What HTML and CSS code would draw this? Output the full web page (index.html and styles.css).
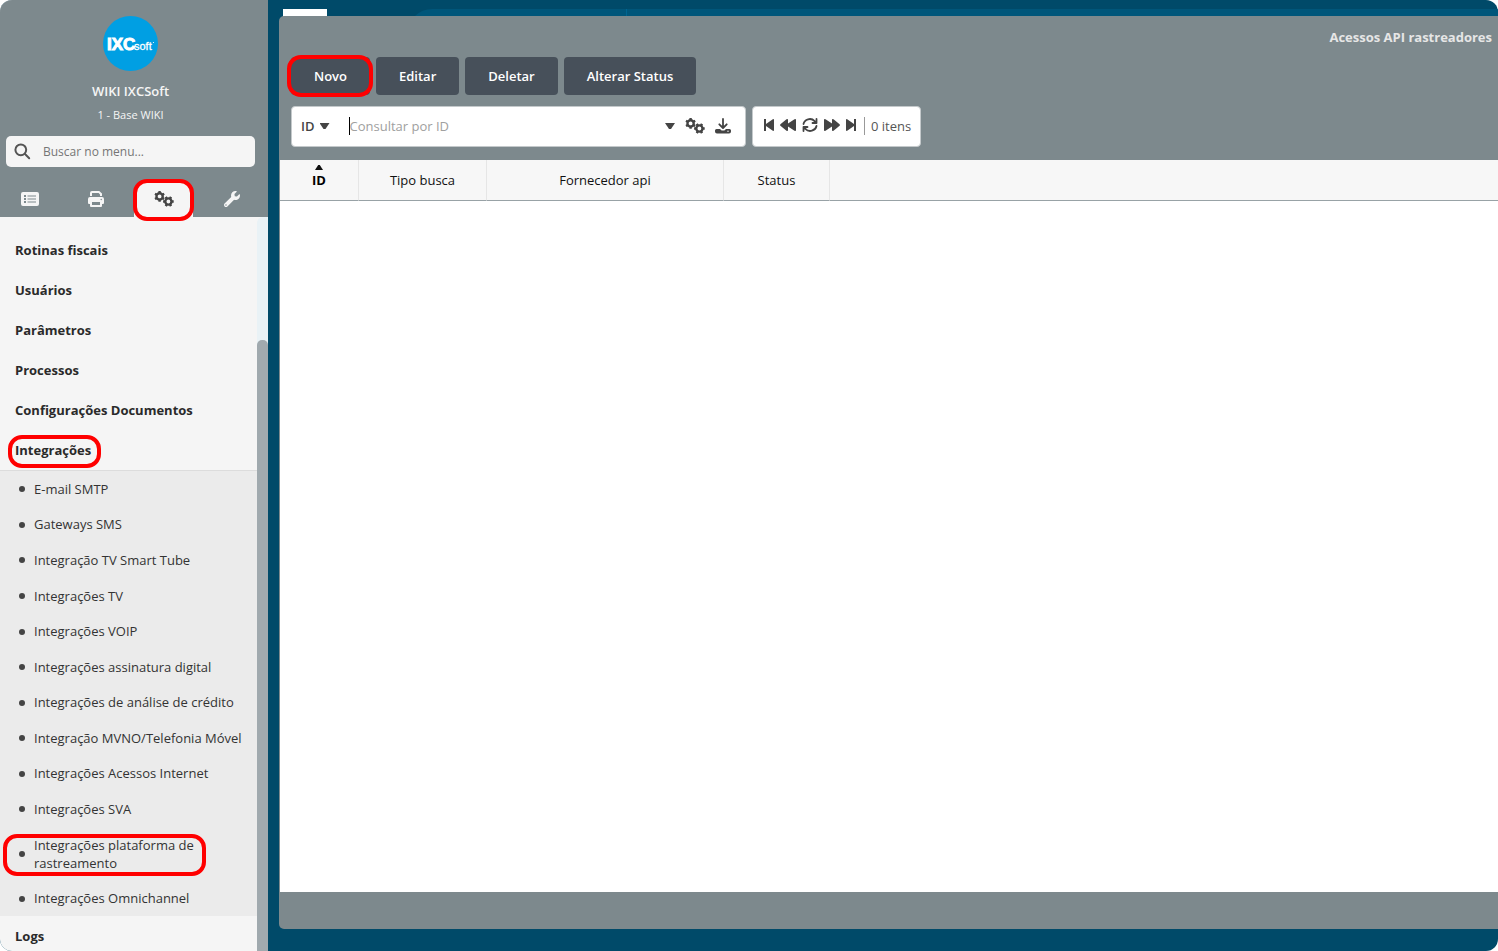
FILE: index.html
```html
<!DOCTYPE html>
<html lang="pt-BR">
<head>
<meta charset="utf-8">
<title>Acessos API rastreadores</title>
<link rel="stylesheet" href="styles.css">
</head>
<body>
<svg class="defs" aria-hidden="true">
  <symbol id="gears" viewBox="0 0 20 16">
    <g fill="none" stroke="currentColor">
      <circle cx="5.6" cy="5.4" r="3.1" stroke-width="2.4"/>
      <path stroke-width="2.4" d="M5.6 2V.1M5.6 8.8v1.9M2.7 3.7 1 2.8M8.5 3.7l1.7-.9M2.7 7.1 1 8M8.5 7.1l1.7.9"/>
      <circle cx="14.4" cy="10.5" r="3.1" stroke-width="2.4"/>
      <path stroke-width="2.4" d="M11 10.5H9.1M17.8 10.5h1.9M12.7 7.6l-.9-1.7M12.7 13.4l-.9 1.7M16.1 7.6l.9-1.7M16.1 13.4l.9 1.7"/>
    </g>
  </symbol>
</svg>
<div class="app">
  <aside class="sidebar">
    <header class="profile">
      <svg class="logo" viewBox="0 0 55 55" role="img" aria-label="IXCsoft">
        <circle cx="27.5" cy="27.5" r="27.5" fill="#009fe3"/>
        <text class="logo-big" x="4" y="34">IXC</text>
        <text class="logo-small" x="31" y="34">soft</text>
        <circle cx="50.5" cy="26.500" r=".6" fill="#fff"/>
      </svg>
      <strong class="company">WIKI IXCSoft</strong>
      <span class="base">1 - Base WIKI</span>
      <label class="search">
        <svg width="17" height="17" viewBox="0 0 17 17" fill="none" stroke="#555" stroke-width="2" stroke-linecap="round"><circle cx="6.8" cy="6.8" r="5.4"/><path d="m11 11 4.200 4.200"/></svg>
        <input type="text" placeholder="Buscar no menu..." aria-label="Buscar no menu">
      </label>
      <nav class="tabs">
        <button type="button" aria-label="Cadastros"><svg width="18" height="14" viewBox="0 0 18 14"><path fill="currentColor" fill-rule="evenodd" d="M2 0h14a2 2 0 0 1 2 2v10a2 2 0 0 1-2 2H2a2 2 0 0 1-2-2V2a2 2 0 0 1 2-2zM3 3v2h2V3zM3 6v2h2V6zM3 9v2h2V9zM6.500 3.400v1.200H15V3.400zM6.500 6.400v1.200H15V6.400zM6.500 9.400v1.200H15V9.400z"/></svg></button>
        <button type="button" aria-label="Relatórios"><svg width="16" height="16" viewBox="0 0 16 16"><path fill="currentColor" fill-rule="evenodd" d="M2 5V2a2 2 0 0 1 2-2h7.200L14 2.600V5h-2V3.400L10.600 2H4v3zM2 6h12a2 2 0 0 1 2 2v4a1 1 0 0 1-1 1h-1v2a1 1 0 0 1-1 1H3a1 1 0 0 1-1-1v-2H1a1 1 0 0 1-1-1V8a2 2 0 0 1 2-2zM4 11v3h8v-3zM13.200 7.800a.7.7 0 1 0 0 1.400.7.7 0 0 0 0-1.400z"/></svg></button>
        <button type="button" class="active marked" aria-label="Configurações"><svg width="20" height="16"><use href="#gears"/></svg></button>
        <button type="button" aria-label="Ferramentas"><svg width="16" height="16" viewBox="0 0 512 512"><path fill="currentColor" d="M507.700 109.100c-2.200-9-13.500-12.100-20.100-5.500l-74.400 74.400-67.900-11.300L334 98.900l74.400-74.400c6.600-6.600 3.400-17.900-5.700-20.200-47.400-11.700-99.600.9-136.600 37.900-39.600 39.600-50.500 97.100-34.100 147.200L18.700 402.800c-25 25-25 65.500 0 90.500s65.500 25 90.500 0l213.200-213.200c50.100 16.700 107.500 5.700 147.400-34.200 37.100-37.100 49.700-89.300 37.900-136.800zM64 472c-13.200 0-24-10.800-24-24s10.700-24 24-24 24 10.700 24 24-10.700 24-24 24z"/></svg></button>
      </nav>
    </header>
    <div class="menu-area">
      <ul class="menu">
        <li><a href="#">Rotinas fiscais</a></li>
        <li><a href="#">Usuários</a></li>
        <li><a href="#">Parâmetros</a></li>
        <li><a href="#">Processos</a></li>
        <li><a href="#">Configurações Documentos</a></li>
        <li><a href="#" class="marked">Integrações</a>
          <ul class="submenu">
            <li><a href="#">E-mail SMTP</a></li>
            <li><a href="#">Gateways SMS</a></li>
            <li><a href="#">Integração TV Smart Tube</a></li>
            <li><a href="#">Integrações TV</a></li>
            <li><a href="#">Integrações VOIP</a></li>
            <li><a href="#">Integrações assinatura digital</a></li>
            <li><a href="#">Integrações de análise de crédito</a></li>
            <li><a href="#">Integração MVNO/Telefonia Móvel</a></li>
            <li><a href="#">Integrações Acessos Internet</a></li>
            <li><a href="#">Integrações SVA</a></li>
            <li class="marked"><a href="#">Integrações plataforma de rastreamento</a></li>
            <li><a href="#">Integrações Omnichannel</a></li>
          </ul>
        </li>
        <li><a href="#">Logs</a></li>
      </ul>
      <div class="scroll-track"><div class="scroll-thumb"></div></div>
    </div>
  </aside>

  <main class="desktop">
    <div class="desktop-tile"></div>
    <div class="desktop-bar"></div>
    <section class="window">
      <h1>Acessos API rastreadores</h1>
      <div class="actions">
        <button type="button" class="marked">Novo</button>
        <button type="button">Editar</button>
        <button type="button">Deletar</button>
        <button type="button">Alterar Status</button>
      </div>
      <div class="filters">
        <div class="panel query">
          <button type="button" class="field">ID <i class="caret"></i></button>
          <input type="text" placeholder="Consultar por ID" aria-label="Consultar por ID">
          <button type="button" aria-label="Opções"><i class="caret"></i></button>
          <button type="button" aria-label="Configurar"><svg width="20" height="16"><use href="#gears"/></svg></button>
          <button type="button" aria-label="Exportar"><svg width="16" height="16" viewBox="0 0 16 16" fill="none" stroke="currentColor"><path stroke-width="1.800" stroke-linecap="round" stroke-linejoin="round" d="M8 1v8.500M4.300 6.300 8 10l3.700-3.700"/><path fill="currentColor" stroke="none" d="M1.500 11H5l1.600 1.600h2.800L11 11h3.500A1.500 1.500 0 0 1 16 12.500v1a2 2 0 0 1-2 2H2a2 2 0 0 1-2-2v-1A1.500 1.500 0 0 1 1.500 11z"/><circle cx="13" cy="13.300" r=".7" fill="#fff" stroke="none"/></svg></button>
        </div>
        <div class="panel pager">
          <button type="button" aria-label="Primeira"><svg width="10" height="12" viewBox="0 0 10 12" fill="currentColor"><path d="M0 0h2v5L8.800.2Q10-.3 10 1v10q0 1.300-1.200.8L2 7v5H0z"/></svg></button>
          <button type="button" aria-label="Anterior"><svg width="16" height="12" viewBox="0 0 16 12" fill="currentColor"><path d="M.4 5.200 6.500.3Q8-.4 8 1v3.500L14.500.3Q16-.4 16 1v10q0 1.400-1.500.7L8 7.500V11q0 1.400-1.500.7L.4 6.800Q-.2 6 .4 5.200z"/></svg></button>
          <button type="button" aria-label="Atualizar"><svg width="16" height="14" viewBox="0 0 16 14" fill="none" stroke="currentColor" stroke-width="1.800" stroke-linecap="round" stroke-linejoin="round"><path d="M1.500 6C2.500 1.200 9-.8 12.600 3.200L14 4.800M14.500 1v4h-4M14.500 8c-1 4.800-7.500 6.800-11.100 2.800L2 9.200M1.500 13V9h4"/></svg></button>
          <button type="button" aria-label="Próxima"><svg width="16" height="12" viewBox="0 0 16 12" fill="currentColor"><path d="M15.600 5.200 9.500.3Q8-.4 8 1v3.500L1.500.3Q0-.4 0 1v10q0 1.400 1.500.7L8 7.500V11q0 1.400 1.500.7l6.100-4.900q.6-.8 0-1.600z"/></svg></button>
          <button type="button" aria-label="Última"><svg width="10" height="12" viewBox="0 0 10 12" fill="currentColor"><path d="M10 0H8v5L1.200.2Q0-.3 0 1v10q0 1.300 1.200.8L8 7v5h2z"/></svg></button>
          <span class="count">0 itens</span>
        </div>
      </div>
      <div class="grid">
        <table>
          <colgroup><col class="c-id"><col class="c-type"><col class="c-vendor"><col class="c-status"><col></colgroup>
          <thead><tr><th class="sorted">ID</th><th>Tipo busca</th><th>Fornecedor api</th><th>Status</th><th></th></tr></thead>
        </table>
      </div>
    </section>
  </main>
</div>
</body>
</html>
```
FILE: styles.css
```css
* { box-sizing: border-box; }

body {
  margin: 0;
  background: #fff;
  font: 13px/18px "Open Sans", "Noto Sans", sans-serif;
}

button, input {
  margin: 0;
  padding: 0;
  border: 0;
  background: none;
  font: inherit;
  color: inherit;
}

button { cursor: pointer; }
a { color: inherit; text-decoration: none; }
ul { margin: 0; padding: 0; list-style: none; }
svg { display: block; }
.defs { position: absolute; width: 0; height: 0; }

.app {
  display: flex;
  height: 100vh;
  overflow: hidden;
  border-radius: 12px;
  background: #004a69;
}

/* Red outline around highlighted controls */
.marked { position: relative; }
.marked::after {
  content: "";
  position: absolute;
  inset: -2px -3px -2px -4px;
  border: 4px solid #f00;
  border-radius: 14px;
  pointer-events: none;
}

/* Sidebar */
.sidebar {
  display: flex;
  flex-direction: column;
  flex: 0 0 268px;
  background: #f5f5f5;
}

.profile {
  display: flex;
  flex-direction: column;
  align-items: center;
  padding-top: 16px;
  background: #7d898d;
  color: #f5f5f5;
}

.logo { width: 55px; height: 55px; margin-right: 7px; }
.logo-big { font: 700 17px "Liberation Sans", sans-serif; fill: #fff; stroke: #fff; }
.logo-small { font: 400 11px "Liberation Sans", sans-serif; fill: #fff; stroke: #fff; stroke-width: .3px; }
.company { margin: 11px 7px 0 0; font-weight: 600; }
.base { margin: 6px 7px 0 0; font-size: 11px; }

.search {
  display: flex;
  align-items: center;
  gap: 12px;
  align-self: stretch;
  height: 31px;
  margin: 12px 13px 14px 6px;
  padding: 0 8px;
  border-radius: 5px;
  background: #f5f5f5;
}
.search input { flex: 1; min-width: 0; font-size: 12px; color: #555; }
.search input::placeholder { color: #757575; }

.tabs {
  display: flex;
  gap: 7px;
  align-self: stretch;
  padding-right: 7px;
}
.tabs button {
  display: flex;
  flex: 1;
  align-items: center;
  justify-content: center;
  height: 36px;
  padding-bottom: 1px;
}
.tabs .active {
  border: solid transparent;
  border-width: 0 2px;
  border-radius: 12px 12px 0 0;
  background: #f5f5f5;
  background-clip: padding-box;
  color: #444;
}
.tabs .active::after { inset: -2px -1px -4px; }

.menu-area { display: flex; flex: 1; min-height: 0; }
.menu {
  flex: 1;
  padding-top: 13px;
  overflow: hidden;
  color: #2a2a2a;
}
.menu > li > a {
  display: block;
  width: fit-content;
  padding: 11px 15px;
  font-weight: 700;
}
.menu .marked::after { inset: 5px 5px 2px 8px; }

.submenu {
  display: flex;
  flex-direction: column;
  justify-content: space-around;
  height: 446px;
  border-top: 1px solid #dcdcdc;
  background: #ebebeb;
  color: #333;
}
.submenu li {
  display: flex;
  align-items: center;
  gap: 9px;
  width: 238px;
  padding-left: 19px;
  white-space: nowrap;
}
.submenu li::before {
  content: "";
  flex: none;
  width: 6px;
  height: 6px;
  margin-top: 1px;
  border-radius: 50%;
  background: #444;
}
.submenu .marked { width: 210px; white-space: normal; }
.menu .submenu .marked::after { inset: -2px 4px -4px 3px; }

.scroll-track {
  flex: none;
  width: 11px;
  padding-top: 123px;
  border-radius: 6px 0 0 0;
  background: #e9f2f6;
}
.scroll-thumb { height: 100%; border-radius: 5px 5px 0 0; background: #a0a9ae; }

/* Desktop and window */
.desktop {
  position: relative;
  display: flex;
  flex: 1;
  min-width: 0;
  padding: 16px 0 22px 11px;
}
.desktop-tile {
  position: absolute;
  top: 9px;
  left: 15px;
  width: 44px;
  height: 20px;
  background: #fff;
}
.desktop-bar {
  position: absolute;
  top: 9px;
  left: 140px;
  right: 0;
  height: 40px;
  border-radius: 24px 0 0 0;
  background: #00567a;
}
.desktop-bar::before {
  content: "";
  display: block;
  width: 1px;
  height: 100%;
  margin-left: 218px;
  background: #006591;
}

.window {
  position: relative;
  display: flex;
  flex-direction: column;
  flex: 1;
  min-width: 0;
  padding: 12px 0 37px 1px;
  border-radius: 5px 0 0 5px;
  background: #7d898d;
}
.window h1 {
  margin: 0 6px 11px;
  font-size: 13px;
  font-weight: 700;
  line-height: 18px;
  text-align: right;
  color: #e6e6e6;
}

.actions { display: flex; gap: 6px; padding-left: 11px; }
.actions button {
  height: 38px;
  padding: 0 23px;
  border-radius: 4px;
  background: #47505a;
  color: #fff;
  font-weight: 600;
}

.filters { display: flex; gap: 6px; padding: 11px 0 13px 11px; }
.panel {
  display: flex;
  align-items: center;
  height: 41px;
  border: 1px solid #c4c9cb;
  border-radius: 4px;
  background: #fff;
  color: #444;
}
.query { width: 455px; padding: 0 14px 1px 9px; gap: 10px; }
.field { display: flex; align-items: center; gap: 5px; font-weight: 600; }
.query input {
  flex: 1;
  min-width: 0;
  height: 18px;
  margin-left: 9px;
  border-left: 1px solid #000;
}
.query input::placeholder { color: #a0a0a0; }
.caret {
  display: block;
  width: 10px;
  height: 6px;
  background: #444;
  clip-path: polygon(0 0, 100% 0, 60% 100%, 40% 100%);
}
.pager { padding: 0 9px 1px 11px; gap: 6px; }
.pager button { margin-bottom: 2px; }
.count {
  margin-left: 2px;
  padding-left: 6px;
  border-left: 1px solid #999;
  color: #555;
}

.grid { flex: 1; background: #fff; }
table { width: 100%; border-collapse: separate; border-spacing: 0; table-layout: fixed; }
th {
  position: relative;
  height: 41px;
  padding: 0;
  border-right: 1px solid #e6e6e6;
  border-bottom: 1px solid #98a2a6;
  background: #f7f7f7;
  color: #111;
  font-weight: 500;
}
th:last-child { border-right: 0; }
.sorted { font-weight: 700; color: #000; }
.sorted::before {
  content: "";
  position: absolute;
  top: 5px;
  left: calc(50% - 4px);
  width: 8px;
  height: 5px;
  background: #111;
  clip-path: polygon(0 100%, 100% 100%, 60% 0, 40% 0);
}
.c-id { width: 79px; }
.c-type { width: 128px; }
.c-vendor { width: 237px; }
.c-status { width: 106px; }
```
